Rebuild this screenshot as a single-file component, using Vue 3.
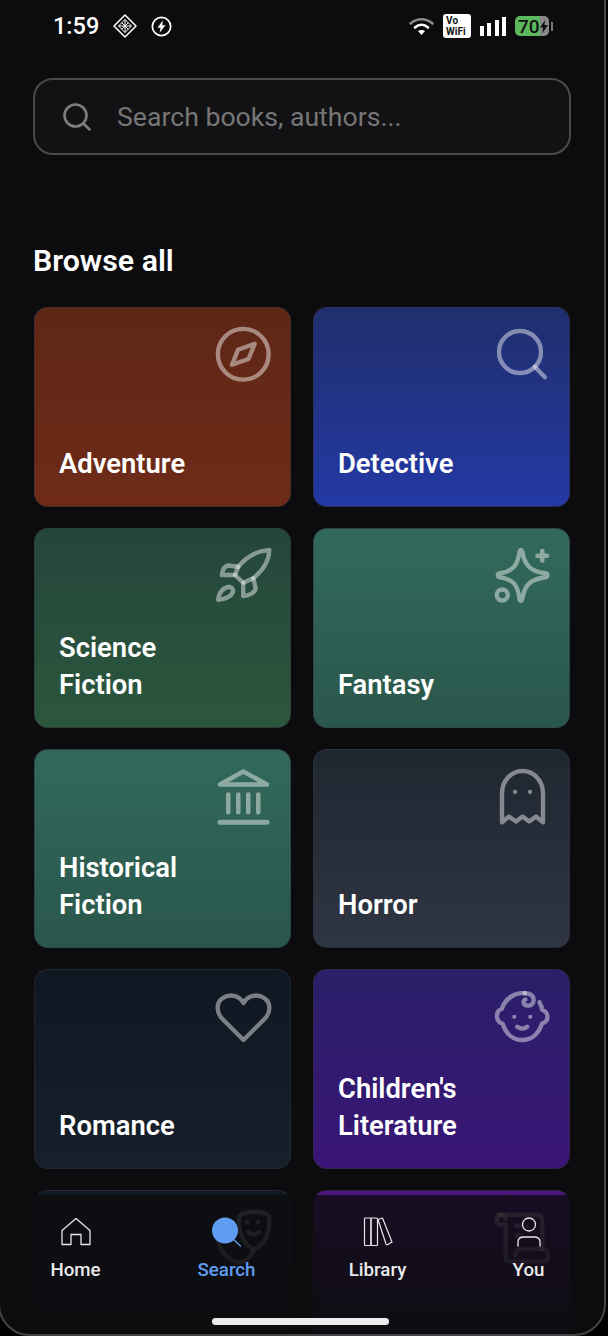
<script setup>
const cards = [
  { name: ['Adventure'], cls: 'adventure', icon: 'compass' },
  { name: ['Detective'], cls: 'detective', icon: 'search' },
  { name: ['Science', 'Fiction'], cls: 'scifi', icon: 'rocket' },
  { name: ['Fantasy'], cls: 'fantasy', icon: 'sparkle' },
  { name: ['Historical', 'Fiction'], cls: 'fantasy', icon: 'temple' },
  { name: ['Horror'], cls: 'horror', icon: 'ghost' },
  { name: ['Romance'], cls: 'romance', icon: 'heart' },
  { name: ["Children's", 'Literature'], cls: 'children', icon: 'baby' },
  { name: [], cls: 'romance', icon: 'masks' },
  { name: [], cls: 'dark', icon: 'scroll' },
];
</script>

<template>
  <div class="screen">
    <div class="status">
      <div class="status__left">
        <span class="time">1:59</span>
        <svg class="st-icon" width="24" height="24" viewBox="0 0 24 24" fill="none" stroke="#fff" stroke-linejoin="round">
          <path d="M12 1 23 12 12 23 1 12Z" stroke-width="1.500" />
          <path d="M12 5.500 18.500 12 12 18.500 5.500 12Z M8.700 8.700 15.300 15.300 M15.300 8.700 8.700 15.300 M12 5.500V18.500 M5.500 12H18.500" stroke-width="1" />
        </svg>
        <svg class="st-icon" width="22" height="22" viewBox="0 0 22 22" fill="none">
          <circle cx="11" cy="11" r="9.600" stroke="#fff" stroke-width="1.800" />
          <path d="M12.500 4.500 6.800 12.200H10L9 17.500 15.200 9.600H11.800Z" fill="#fff" />
        </svg>
      </div>
      <div class="status__right">
        <svg width="25" height="18" viewBox="0 0 25 18" fill="none" stroke-linecap="round">
          <path d="M1.500 6.500C8 .8 17 .8 23.500 6.500" stroke="#8a8a8a" stroke-width="2.600" />
          <path d="M6 10.500C10 7 15 7 19 10.500" stroke="#fff" stroke-width="2.600" />
          <path d="M12.500 18 9 14C11 12.500 14 12.500 16 14Z" fill="#fff" />
        </svg>
        <div class="vowifi">Vo<br />WiFi</div>
        <div class="bars">
          <i style="height: 10px"></i><i style="height: 13px"></i><i style="height: 16px"></i><i style="height: 19px"></i>
        </div>
        <div class="battery">
          <div class="battery__body">
            <span>70</span>
            <svg width="8" height="13" viewBox="0 0 8 13"><path d="M5 0 0 7.500H3L2.500 13 8 5H4.500Z" fill="#111" /></svg>
          </div>
          <div class="battery__cap"></div>
        </div>
      </div>
    </div>

    <div class="search">
      <svg width="28" height="28" viewBox="0 0 28 28" fill="none" stroke="#7d7d7d" stroke-width="2.600" stroke-linecap="round">
        <circle cx="12.500" cy="12.500" r="11" />
        <path d="M21 21 26.500 26.500" />
      </svg>
      <span>Search books, authors...</span>
    </div>

    <h2 class="title">Browse all</h2>

    <div class="grid">
      <div v-for="(c, i) in cards" :key="i" class="card" :class="c.cls">
        <svg class="card__icon" width="60" height="60" viewBox="0 0 24 24" fill="none" stroke="#fff" stroke-opacity=".45" stroke-width="1.750" stroke-linecap="round" stroke-linejoin="round">
          <template v-if="c.icon === 'compass'">
            <circle cx="12.500" cy="12.100" r="10.150" />
            <path d="M17.100 7.900 14.600 14 8 16.300 10.400 10.300Z" />
          </template>
          <template v-else-if="c.icon === 'search'">
            <circle cx="11.600" cy="11.200" r="8.400" />
            <path d="M17.500 17.100 21.600 21.300" />
          </template>
          <template v-else-if="c.icon === 'rocket'">
            <path d="M10.500 8.700C13.500 5 18 2.300 22.900 2 22.800 7 20 10.500 16.500 13.300L12.500 15.100 9.200 12Z" />
            <path d="M10.500 8.700 6.500 8.200C5 8.400 4.200 10 3.900 12L9.200 12" />
            <path d="M16.500 13.300 17.500 17.300C17.200 19 15 20.200 12.500 20.400L12.500 15.100" />
            <path d="M2.500 21.900C2.700 19 4.500 16.900 7 16.700 8 17 8.500 17.800 8.400 18.800 7.500 20.800 5 21.700 2.500 21.900Z" />
          </template>
          <template v-else-if="c.icon === 'sparkle'">
            <path d="M12.500 2.600C13.500 8 15.500 10.500 21.800 11.300 22.800 11.500 22.800 12.700 21.800 12.900 15.500 13.700 13.500 16 12.500 21.600 12.200 22.500 11.700 22.500 11.400 21.600 10.700 16 9 13.700 3.500 12.900 2.500 12.700 2.500 11.500 3.500 11.300 9 10.500 10.700 8 11.400 2.600 11.700 1.800 12.200 1.800 12.500 2.600Z" />
            <path d="M20.500 2.400V6.200M18.600 4.300H22.400" stroke-width="1.800" />
            <circle cx="4.500" cy="20" r="2.200" />
          </template>
          <template v-else-if="c.icon === 'temple'">
            <path d="M3.200 7.400 12.500 2.200 22 7.400Z" stroke-width="1.800" />
            <path d="M6.500 11.400V18.500M10.500 11.400V18.500M14.500 11.400V18.500M18.500 11.400V18.500" stroke-width="1.800" />
            <path d="M3.200 22.500H22" stroke-width="2" />
          </template>
          <template v-else-if="c.icon === 'ghost'">
            <path d="M4.400 22.500V11C4.400 6 8 2 12.600 2S20.800 6 20.800 11V22.500L18 20.200 15.300 22.200 12.600 20.200 10 22.200 7.200 20.200Z" />
            <path d="M9.600 10.400H9.610M15.600 10.400H15.610" stroke-width="1.700" />
          </template>
          <template v-else-if="c.icon === 'heart'">
            <path d="M12.600 21.600 4 13C1.500 10.200 1.800 6.500 4.200 4.900 7 3 10.800 3.600 12.600 6.800 14.400 3.600 18.200 3 21 4.900 23.400 6.500 23.700 10.200 21.200 13Z" />
          </template>
          <template v-else-if="c.icon === 'baby'">
            <path d="M13.500 2.900C9.500 2.400 5.600 5.200 4.300 9.200 2.800 9.600 2.300 11 2.400 12.400 2.600 13.900 3.500 14.700 4.600 15 6 19.300 9 21.600 12.500 21.600S19 19.300 20.400 15C21.500 14.700 22.600 13.900 22.600 12.400 22.600 11 21.700 10 20.500 9.500 20.300 8.400 19.900 7.500 19.400 6.500" />
            <path d="M13.500 2.900C16 2.700 17.300 4.300 17 6.100 16.700 7.700 15 8.200 13.800 7.600 12.800 7.100 12.800 5.800 13.800 5.400" />
            <path d="M10.500 16.300C11.700 17.200 13.300 17.200 14.500 16.300" />
            <path d="M9.300 12.300H9.310M15.700 12.300H15.710" stroke-width="1.700" />
          </template>
          <template v-else-if="c.icon === 'masks'">
            <path d="M10.800 3.500C14 1.500 20 1.500 22.800 3.500 23.300 10 21.500 15 16.800 17 12.500 15 10.300 10 10.800 3.500Z" />
            <path d="M13.900 6H14M18.400 6H18.500M14.300 10C15.700 11.300 17.500 11.300 18.800 10" />
            <path d="M8 7.500C5.500 7.800 3.500 8.800 2 10.300 2.300 16.500 6 21.800 11.200 22.300 13.500 21.800 15.500 20.300 16.500 17.500" />
          </template>
          <template v-else-if="c.icon === 'scroll'">
            <path d="M3.800 3.100H18C19.600 3.100 20.500 4 20.500 5.600V16.800" />
            <path d="M3.800 3.100C2.600 3.100 2.300 4.200 2.300 5 2.300 6.200 3 7 4 7H5.900V20C5.900 21.300 6.800 21.800 8 21.800H21C22.300 21.800 22.900 20.800 22.900 19.400S22.300 16.800 21 16.800H11.500C10.300 16.800 9.700 18 9.700 19.400" />
            <path d="M5.900 4.800C5.900 3.800 5 3.100 3.800 3.100M10.200 7.500H11.500M10.200 11.500H11.500" />
          </template>
        </svg>
        <div class="card__name">
          <div v-for="line in c.name" :key="line">{{ line }}</div>
        </div>
      </div>
    </div>

    <nav class="nav">
      <div class="nav__item">
        <svg width="30" height="30" viewBox="0 0 30 30" fill="none" stroke="#e6e6e6" stroke-width="1.300" stroke-linejoin="round">
          <path d="M15 1.500 29 13.500V27.500H20V17.500H10V27.500H1V13.500Z" />
        </svg>
        <span>Home</span>
      </div>
      <div class="nav__item nav__item--active">
        <svg width="30" height="30" viewBox="0 0 30 30" fill="none">
          <circle cx="13" cy="13.500" r="13" fill="#5f9df1" />
          <path d="M21 22 29 29.500" stroke="#5f9df1" stroke-width="1.300" />
        </svg>
        <span>Search</span>
      </div>
      <div class="nav__item">
        <svg width="30" height="30" viewBox="0 0 30 30" fill="none" stroke="#e6e6e6" stroke-width="1.200" stroke-linejoin="round">
          <rect x="1.500" y="1" width="6.500" height="27.500" rx="1" />
          <rect x="8" y="1" width="6.500" height="27.500" rx="1" />
          <path d="M15 2.500 19.500 1 29 25 25 27.500C24 28 23.500 27.800 23 27Z" />
        </svg>
        <span>Library</span>
      </div>
      <div class="nav__item">
        <svg width="30" height="30" viewBox="0 0 30 30" fill="none" stroke="#e6e6e6" stroke-width="1.300" stroke-linecap="round">
          <circle cx="15" cy="7.500" r="6.500" />
          <path d="M4 29V25C4 21.500 7 20 10 20H20C23 20 26 21.500 26 25V29" />
        </svg>
        <span>You</span>
      </div>
    </nav>
    <div class="home-pill"></div>
    <div class="frame"></div>
  </div>
</template>

<style>
body {
  background: #0b0b0d;
}
</style>

<style scoped>
.screen {
  position: relative;
  width: 608px;
  height: 1336px;
  padding: 0 37px 0 34px;
  box-sizing: border-box;
  overflow: hidden;
  background: #0c0c0e;
  font-family: Roboto, sans-serif;
  color: #fff;
}

.status {
  display: flex;
  align-items: center;
  justify-content: space-between;
  height: 52px;
  padding: 0 18px 0 19px;
}

.status__left {
  display: flex;
  align-items: center;
  gap: 14px;
}

.status__left .st-icon:last-child {
  width: 21px;
  height: 21px;
}

.time {
  font-size: 23.500px;
  font-weight: 500;
}

.st-icon {
  display: block;
}

.status__right {
  display: flex;
  align-items: center;
  gap: 9px;
}

.vowifi {
  width: 28px;
  height: 24px;
  padding: 0.500px 0 0 3px;
  box-sizing: border-box;
  border-radius: 3px;
  background: #fff;
  color: #111;
  font-size: 10px;
  line-height: 11.800px;
  font-weight: 700;
}

.bars {
  display: flex;
  align-items: flex-end;
  gap: 3.300px;
}

.bars i {
  display: block;
  width: 4px;
  background: #fff;
}

.battery {
  display: flex;
  align-items: center;
  gap: 2px;
}

.battery__body {
  display: flex;
  align-items: center;
  width: 34px;
  height: 20px;
  padding-left: 3px;
  box-sizing: border-box;
  border-radius: 5px;
  background: linear-gradient(90deg, #5cb85c 74%, #8a8a8a 74%);
  color: #111;
  font-size: 19px;
  font-weight: 500;
}

.battery__cap {
  width: 2px;
  height: 9px;
  background: #777;
}

.search {
  display: flex;
  align-items: center;
  gap: 26px;
  height: 77px;
  margin: 26px 0 0 -1px;
  padding: 0 27px 0 28px;
  box-sizing: border-box;
  border: 2px solid #4a4a4c;
  border-radius: 20px;
  background: #121214;
  font-size: 26.650px;
  color: #767676;
}

.title {
  margin: 88px 0 0 -1px;
  height: 36px;
  font-size: 30.300px;
  line-height: 36px;
  font-weight: 600;
}

.grid {
  display: grid;
  grid-template-columns: repeat(2, 257px);
  grid-auto-rows: 199.750px;
  gap: 21px 22px;
  margin-top: 28px;
}

.card {
  position: relative;
  display: flex;
  align-items: flex-end;
  padding: 0 24px 23px;
  box-sizing: border-box;
  border: 1px solid rgba(50, 50, 60, 0.55);
  border-radius: 14px;
}

.card__icon {
  position: absolute;
  top: 16px;
  right: 18px;
}

.card__name {
  font-size: 27.400px;
  line-height: 37px;
  font-weight: 650;
}

.adventure { background: linear-gradient(180deg, #5e2716, #6f2b18); }
.detective { background: linear-gradient(180deg, #202e6d, #2339a4); }
.scifi { background: linear-gradient(180deg, #24463b, #2b573d); }
.fantasy { background: linear-gradient(180deg, #32695a, #2a574b); }
.horror { background: linear-gradient(180deg, #1f2731, #2f3542); }
.romance { background: linear-gradient(180deg, #0f1722, #17202a); }
.children { background: linear-gradient(180deg, #2a1f68, #3a1577); }
.dark { background: linear-gradient(180deg, #4e1480, #2a1050); }

.nav {
  position: absolute;
  left: 0;
  right: 0;
  bottom: 0;
  height: 141px;
  display: grid;
  grid-template-columns: repeat(4, 151px);
  padding: 22px 0 0;
  box-sizing: border-box;
  background: linear-gradient(180deg, rgba(12, 12, 14, 0.8), rgba(12, 12, 14, 0.95));
}

.nav__item {
  display: flex;
  flex-direction: column;
  align-items: center;
  gap: 12px;
  font-size: 18.700px;
  line-height: 22px;
  font-weight: 500;
  color: #ececec;
}

.nav__item--active {
  color: #5f9df1;
}

.home-pill {
  position: absolute;
  left: 212px;
  bottom: 11px;
  width: 177px;
  height: 7px;
  border-radius: 4px;
  background: #ececec;
}

.frame {
  position: absolute;
  inset: -2px 2px 0 -2px;
  border: 2px solid #444;
  border-radius: 0 0 32px 32px;
  box-shadow: 0 0 0 40px #000;
  pointer-events: none;
}
</style>
